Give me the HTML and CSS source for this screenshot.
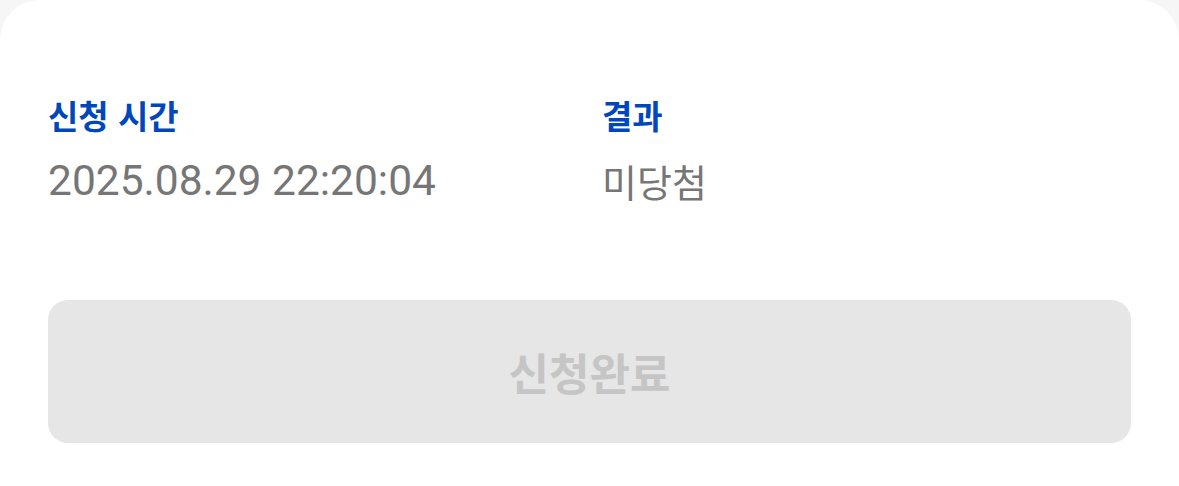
FILE: index.html
```html
<!DOCTYPE html>
<html lang="ko">
<head>
    <meta charset="UTF-8" />
    <meta name="viewport" content="width=device-width, initial-scale=1.0" />
    <title>신청 내역</title>
    <link rel="stylesheet" href="styles.css">
</head>
<body>
    <div class="sheet">
        <!-- 신청 정보 -->
        <div class="info">
            <div class="field">
                <div class="label">신청 시간</div>
                <div class="value num">2025.08.29 22:20:04</div>
            </div>
            <div class="field">
                <div class="label">결과</div>
                <div class="value">미당첨</div>
            </div>
        </div>

        <button class="submit" disabled>신청완료</button>
    </div>
</body>
</html>
```

FILE: styles.css
```css
html, body {
    height: 100%;
}
body {
    margin: 0;
    background-color: #f6f6f6;
    font-family: "Noto Sans CJK KR", "Noto Sans", sans-serif;
}
.sheet {
    box-sizing: border-box;
    height: 100%;
    background: #fff;
    border-radius: 40px 40px 0 0;
    padding: 95px 48px 0;
}
.info {
    display: grid;
    grid-template-columns: 554px 1fr;
}
.label {
    font-size: 33px;
    font-weight: 700;
    line-height: 40px;
    color: #0047bb;
}
.value {
    margin-top: 20px;
    font-size: 38px;
    line-height: 52px;
    color: #767676;
}
.value.num {
    font-family: "Roboto", "Noto Sans CJK KR", sans-serif;
    font-size: 42.5px;
}
.submit {
    display: block;
    width: 100%;
    height: 143px;
    margin-top: 93px;
    border: none;
    border-radius: 20px;
    background-color: #e6e6e6;
    color: #c5c5c5;
    font-family: inherit;
    font-size: 44px;
    font-weight: 700;
}
```
